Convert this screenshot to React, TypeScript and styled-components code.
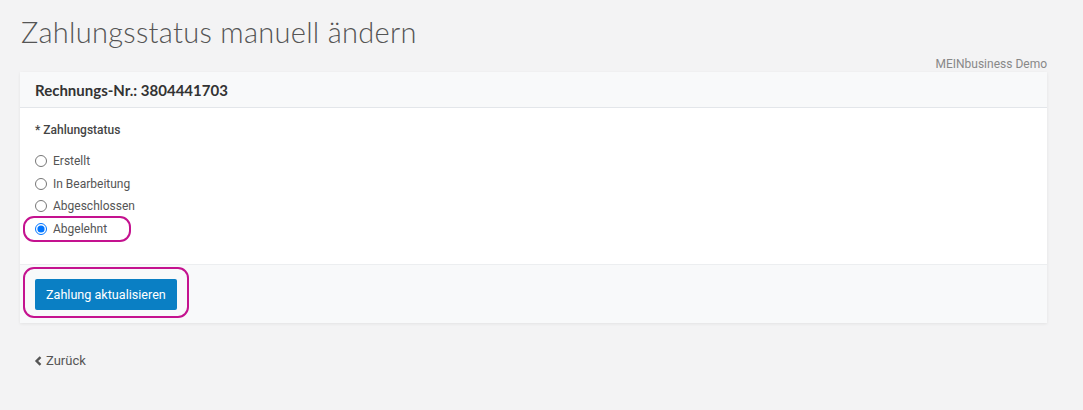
import React, { useState } from 'react';
import styled, { createGlobalStyle } from 'styled-components';

const GlobalStyle = createGlobalStyle`
  html, body {
    margin: 0;
    padding: 0;
    background: #f3f3f4;
  }
  body {
    font-family: Roboto, "Liberation Sans", Arial, sans-serif;
    color: #555;
  }
`;

const Page = styled.div`
  padding: 14px 36px 0 20px;
  min-height: 410px;
  box-sizing: border-box;
`;

const Title = styled.h1`
  margin: 0 0 0 1px;
  font-family: Lato, "Open Sans", sans-serif;
  font-weight: 300;
  font-size: 29px;
  line-height: 36px;
  color: #555;
  letter-spacing: 0.3px;
`;

const Company = styled.div`
  text-align: right;
  font-size: 12px;
  line-height: 14px;
  color: #888;
  margin: 7px 0 1px;
`;

const Card = styled.div`
  background: #fff;
  box-shadow: 0 1px 3px rgba(0, 0, 0, 0.07);
`;

const CardHeader = styled.div`
  height: 35px;
  display: flex;
  align-items: center;
  padding: 0 15px;
  background: #f8f9fa;
  border-bottom: 1px solid #e3e6ea;
  font-family: Lato, "Open Sans", sans-serif;
  font-weight: 700;
  font-size: 15px;
  color: #333;
`;

const CardBody = styled.div`
  padding: 15px 15px 24px;
`;

const FieldLabel = styled.div`
  font-size: 12px;
  line-height: 14px;
  font-weight: 500;
  color: #444;
  margin-bottom: 13px;
`;

const RadioList = styled.div`
  display: flex;
  flex-direction: column;
  align-items: flex-start;
`;

const RadioRow = styled.label`
  display: flex;
  align-items: center;
  gap: 6px;
  height: 22.5px;
  font-size: 12px;
  color: #555;
  cursor: pointer;

  input {
    margin: 0;
    width: 12px;
    height: 12px;
  }
`;

const Highlight = styled.span<{ $t: number; $r: number; $b: number; $l: number }>`
  position: relative;
  display: inline-flex;

  &::after {
    content: '';
    position: absolute;
    top: ${(p) => -p.$t}px;
    right: ${(p) => -p.$r}px;
    bottom: ${(p) => -p.$b}px;
    left: ${(p) => -p.$l}px;
    border: 2px solid #c4128f;
    border-radius: 11px;
    pointer-events: none;
  }
`;

const CardFooter = styled.div`
  padding: 14px 15px 13px;
  background: #f8f9fa;
  border-top: 1px solid #eceef0;
`;

const PrimaryButton = styled.button`
  height: 31px;
  padding: 0 11px;
  border: none;
  border-radius: 2px;
  background: #0a7fc4;
  color: #fff;
  font-family: Roboto, "Liberation Sans", Arial, sans-serif;
  font-size: 12.6px;
  cursor: pointer;
`;

const BackLink = styled.a`
  display: inline-flex;
  align-items: center;
  gap: 3px;
  margin: 30px 0 0 14px;
  font-size: 13px;
  color: #555;
  text-decoration: none;
  cursor: pointer;
`;

const statuses = ['Erstellt', 'In Bearbeitung', 'Abgeschlossen', 'Abgelehnt'];

export default function App() {
  const [status, setStatus] = useState('Abgelehnt');

  return (
    <>
      <GlobalStyle />
      <Page>
        <Title>Zahlungsstatus manuell ändern</Title>
        <Company>MEINbusiness Demo</Company>
        <Card>
          <CardHeader>Rechnungs-Nr.: 3804441703</CardHeader>
          <CardBody>
            <FieldLabel>* Zahlungstatus</FieldLabel>
            <RadioList>
              {statuses.map((s) => {
                const row = (
                  <RadioRow key={s}>
                    <input
                      type="radio"
                      name="status"
                      checked={status === s}
                      onChange={() => setStatus(s)}
                    />
                    {s}
                  </RadioRow>
                );
                return s === 'Abgelehnt' ? (
                  <Highlight key={s} $t={2} $r={24} $b={2} $l={12}>
                    {row}
                  </Highlight>
                ) : (
                  row
                );
              })}
            </RadioList>
          </CardBody>
          <CardFooter>
            <Highlight $t={12} $r={12} $b={8} $l={12}>
              <PrimaryButton>Zahlung aktualisieren</PrimaryButton>
            </Highlight>
          </CardFooter>
        </Card>
        <BackLink>
          <svg width="9" height="10" viewBox="0 0 9 10">
            <path d="M6.5 1.2 L2.6 5 L6.5 8.8" fill="none" stroke="#555" strokeWidth="2.4" />
          </svg>
          Zurück
        </BackLink>
      </Page>
    </>
  );
}
